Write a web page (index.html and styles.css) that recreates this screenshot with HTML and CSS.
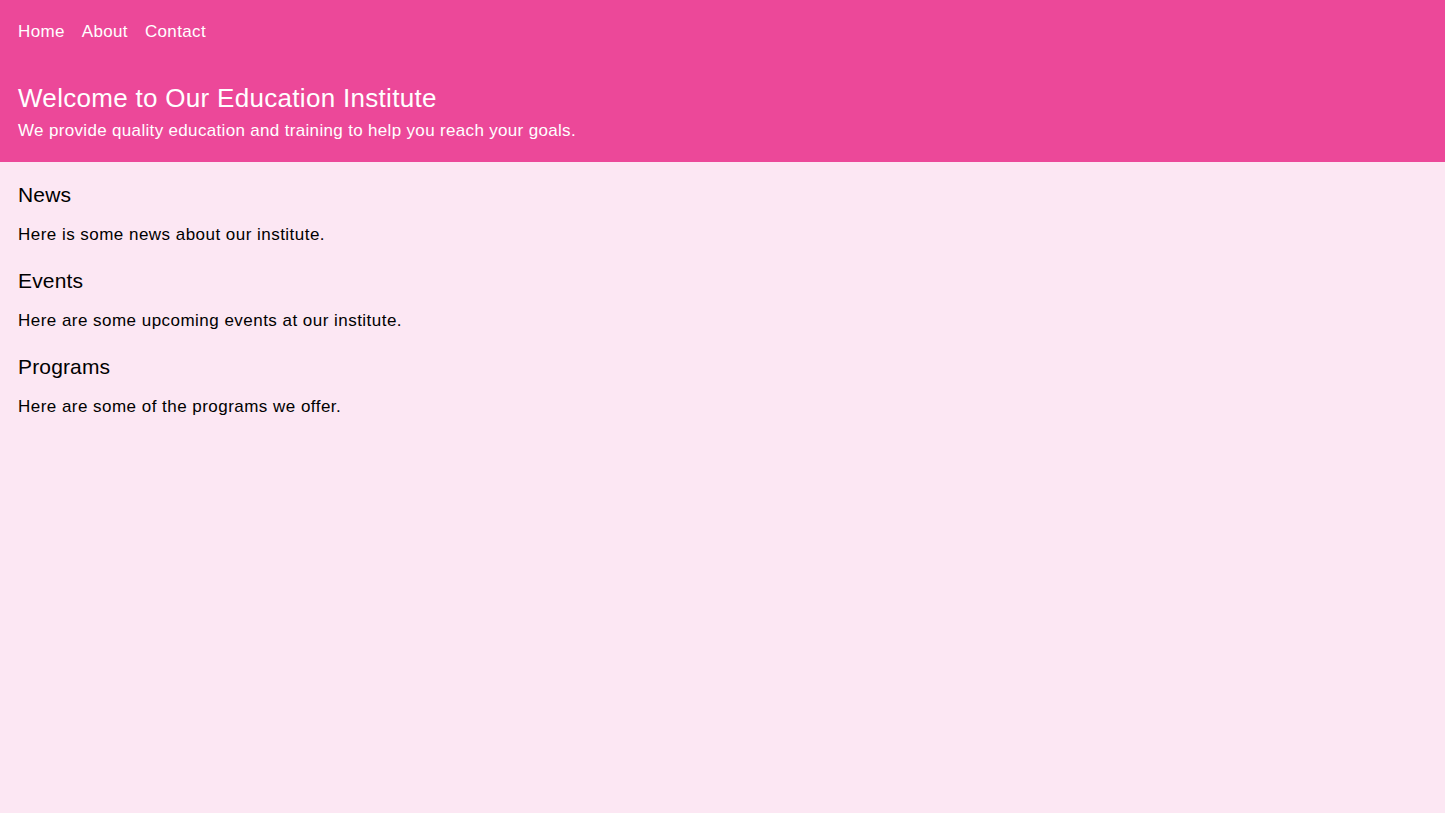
FILE: index.html
```html
<!DOCTYPE html>
<html lang="en">
<head>
    <meta charset="UTF-8">
    <meta name="viewport" content="width=device-width, initial-scale=1.0">
    <title>Education Institute</title>
    <link rel="stylesheet" href="styles.css">
</head>
<body>
    <header class="site-header">
        <nav class="nav">
            <a href="#">Home</a>
            <a href="#">About</a>
            <a href="#">Contact</a>
        </nav>
        <div class="hero">
            <h1>Welcome to Our Education Institute</h1>
            <p>We provide quality education and training to help you reach your goals.</p>
        </div>
    </header>

    <main class="content">
        <section class="block">
            <h2>News</h2>
            <p>Here is some news about our institute.</p>
        </section>
        <section class="block">
            <h2>Events</h2>
            <p>Here are some upcoming events at our institute.</p>
        </section>
        <section class="block">
            <h2>Programs</h2>
            <p>Here are some of the programs we offer.</p>
        </section>
    </main>
</body>
</html>
```

FILE: styles.css
```css
body {
    font-family: "Liberation Sans", Arial, sans-serif;
    background-color: #fce7f3;
    margin: 0;
    padding: 0;
    min-height: 813px;
}
.site-header {
    background: #ec4899;
    color: #fff;
}
.nav {
    display: flex;
    gap: 17px;
    padding: 20px 18px 0;
}
.nav a {
    color: #fff;
    text-decoration: none;
    font-size: 17px;
    line-height: 24px;
    letter-spacing: 0.35px;
}
.hero {
    padding: 38px 18px 19px;
}
.hero h1 {
    margin: 0;
    font-size: 26px;
    line-height: 32px;
    font-weight: normal;
    letter-spacing: 0.3px;
}
.hero p {
    margin: 5px 0 0;
    font-size: 17px;
    line-height: 24px;
    letter-spacing: 0.33px;
}
.content {
    padding: 19px 18px;
}
.block {
    margin-bottom: 20px;
}
.block h2 {
    margin: 0 0 14px;
    font-size: 21px;
    line-height: 28px;
    font-weight: normal;
    letter-spacing: 0.15px;
}
.block p {
    margin: 0;
    font-size: 17px;
    line-height: 24px;
    letter-spacing: 0.47px;
}
```
